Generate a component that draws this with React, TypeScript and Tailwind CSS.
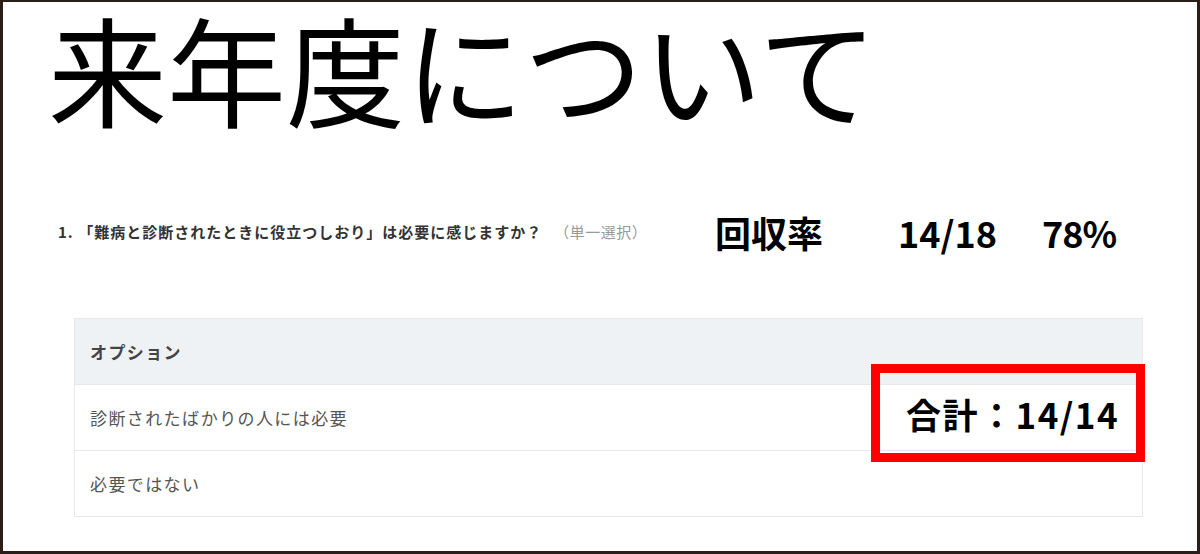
const options = ['診断されたばかりの人には必要', '必要ではない'];

export default function App() {
  return (
    <div className="relative h-[554px] w-[1200px] border-x-[3px] border-t-2 border-b-[3px] border-[#2b1d18] bg-white font-['Noto_Sans_CJK_JP',sans-serif] text-black">
      {/* Title */}
      <h1 className="-mt-[3px] ml-[45px] text-[119px] leading-[1.15] font-normal">
        来年度について
      </h1>

      {/* Question + response rate */}
      <div className="mt-[76px] flex h-[40px] items-center">
        <div className="flex w-[712px] shrink-0 items-center pl-[55px]">
          <span className="text-[15px] font-bold tracking-[1px] text-[#333]">
            1. 「難病と診断されたときに役立つしおり」は必要に感じますか？
          </span>
          <span className="ml-[12px] text-[15px] tracking-[0.5px] text-[#999]">
            （単一選択）
          </span>
        </div>
        <div className="flex items-center text-[36px] leading-none">
          <span className="font-bold">回収率</span>
          <span className="ml-[75px] font-semibold">14/18</span>
          <span className="ml-[45px] font-semibold tracking-[-1px]">78%</span>
        </div>
      </div>

      {/* Options table */}
      <div className="ml-[71px] mt-[66px] w-[1069px] border border-[#e6e8eb]">
        <div className="flex h-[65px] items-center bg-[#eff2f5] px-[15px] text-[17px] font-bold tracking-[1.4px] text-[#444]">
          オプション
        </div>
        {options.map((o) => (
          <div
            key={o}
            className="flex h-[66px] items-center border-t border-[#e6e8eb] px-[15px] text-[17px] tracking-[1.4px] text-[#555]"
          >
            {o}
          </div>
        ))}
      </div>

      {/* Highlight box */}
      <div className="absolute left-[868px] top-[362px] flex h-[98px] w-[274px] items-center border-[9px] border-[#ff0000] pl-[26px]">
        <span className="text-[35px] font-semibold leading-none tracking-[1.5px]">合計：14/14</span>
      </div>
    </div>
  );
}
